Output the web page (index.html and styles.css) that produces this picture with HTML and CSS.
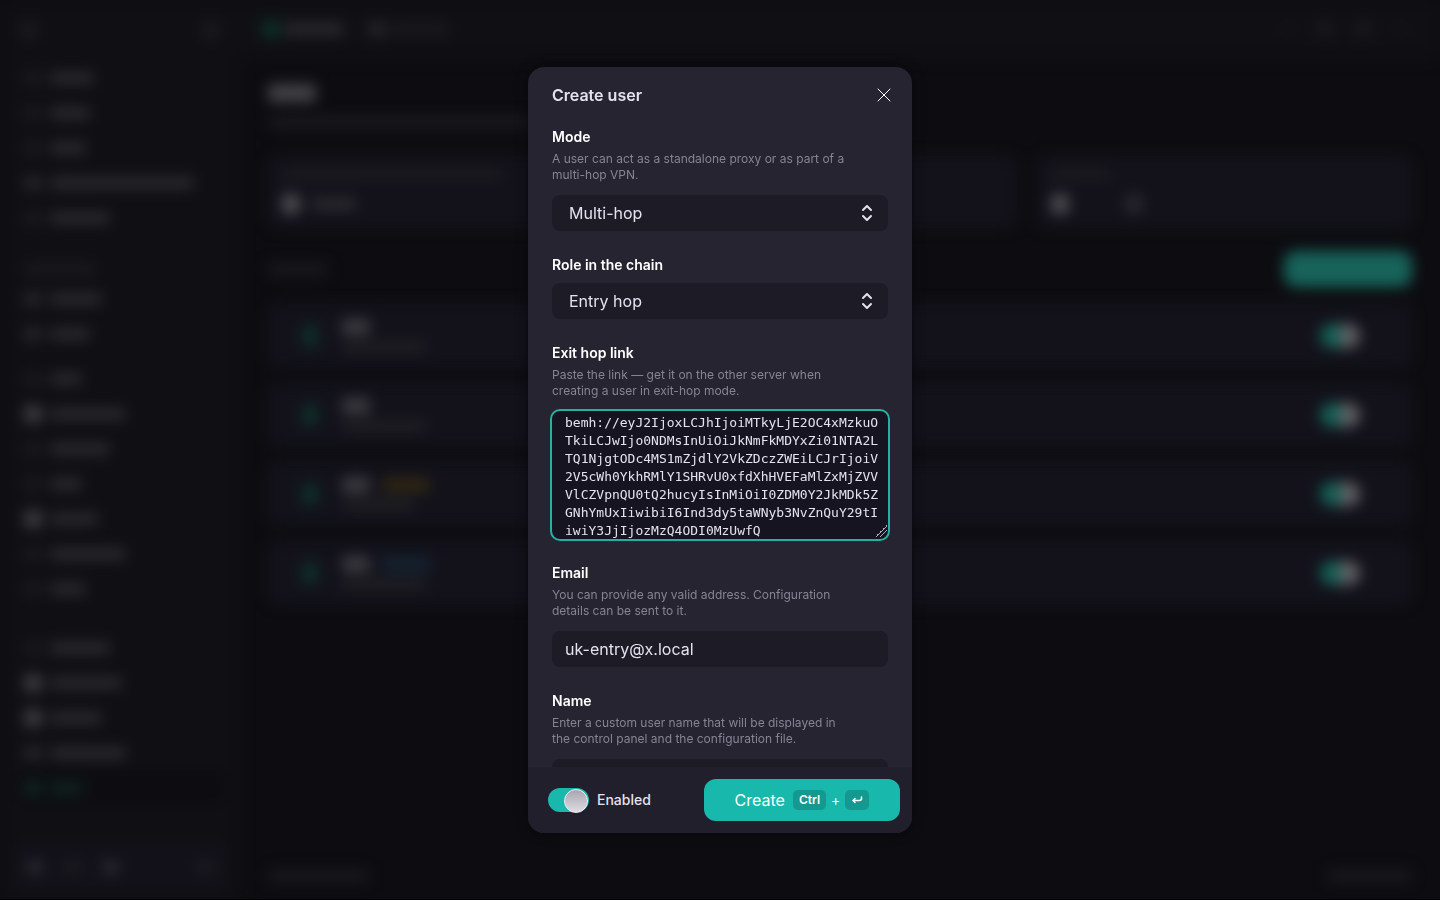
FILE: index.html
```html
<!DOCTYPE html>
<html lang="en">
<head>
<meta charset="utf-8">
<meta name="viewport" content="width=device-width, initial-scale=1">
<title>Create user</title>
<link rel="stylesheet" href="styles.css">
</head>
<body>
<div class="app" aria-hidden="true">
  <aside class="side">
    <div class="side-top"><i class="dot faint"></i><i class="dot faint"></i></div>
    <div class="group">
      <div class="item"><i class="ico"></i><i class="bar w44"></i></div>
      <div class="item"><i class="ico"></i><i class="bar w40"></i></div>
      <div class="item"><i class="ico"></i><i class="bar w36"></i></div>
      <div class="item"><i class="ico mid"></i><i class="bar w144"></i></div>
      <div class="item"><i class="ico"></i><i class="bar w60"></i></div>
    </div>
    <div class="group">
      <div class="caption"><i class="bar faint w72"></i></div>
      <div class="item"><i class="ico mid"></i><i class="bar w52"></i></div>
      <div class="item"><i class="ico mid"></i><i class="bar w40"></i></div>
    </div>
    <div class="group tight">
      <div class="item"><i class="ico"></i><i class="bar w32"></i></div>
      <div class="item"><i class="ico hi"></i><i class="bar w76"></i></div>
      <div class="item"><i class="ico"></i><i class="bar w60"></i></div>
      <div class="item"><i class="ico"></i><i class="bar w32"></i></div>
      <div class="item"><i class="ico hi"></i><i class="bar w48"></i></div>
      <div class="item"><i class="ico"></i><i class="bar w76"></i></div>
      <div class="item"><i class="ico"></i><i class="bar w36"></i></div>
    </div>
    <div class="group last">
      <div class="item"><i class="ico"></i><i class="bar w60"></i></div>
      <div class="item"><i class="ico hi"></i><i class="bar w72"></i></div>
      <div class="item"><i class="ico hi"></i><i class="bar w52"></i></div>
      <div class="item"><i class="ico mid"></i><i class="bar w76"></i></div>
      <div class="item active"><i class="ico"></i><i class="bar w32"></i></div>
    </div>
    <div class="side-foot"><i class="ico mid"></i><i class="ico"></i><i class="ico mid"></i><i class="ico end"></i></div>
  </aside>
  <div class="main">
    <div class="topbar"><i class="logo"></i><i class="bar w60"></i><i class="ico mid"></i><i class="bar faint w60"></i><span class="tools"><i class="ico dim"></i><i class="ico"></i><i class="ico"></i><i class="ico dim"></i></span></div>
    <div class="heading"><i class="bar title w48"></i><i class="bar faint w300"></i></div>
    <div class="stats">
      <div class="card stat"><i class="bar faint w220"></i><span class="line"><i class="dot hi"></i><i class="bar w44"></i></span></div>
      <div class="card stat"><i class="bar faint w60"></i><span class="line"><i class="dot hi"></i><i class="gap"></i><i class="dot"></i></span></div>
    </div>
    <div class="listhead"><i class="bar faint w60"></i><i class="primary"></i></div>
    <div class="rows">
      <div class="card row"><i class="state"></i><span class="who"><span class="line"><i class="bar hi w28"></i></span><i class="bar w84"></i></span><i class="tog"></i></div>
      <div class="card row"><i class="state"></i><span class="who"><span class="line"><i class="bar hi w28"></i></span><i class="bar w84"></i></span><i class="tog"></i></div>
      <div class="card row"><i class="state"></i><span class="who"><span class="line"><i class="bar hi w28"></i><i class="tag amber"></i></span><i class="bar w72"></i></span><i class="tog"></i></div>
      <div class="card row"><i class="state"></i><span class="who"><span class="line"><i class="bar hi w28"></i><i class="tag blue"></i></span><i class="bar w84"></i></span><i class="tog"></i></div>
    </div>
    <div class="foot"><i class="bar faint w100"></i><i class="bar faint w84"></i></div>
  </div>
</div>

<div class="overlay">
  <form class="modal" role="dialog" aria-modal="true" aria-labelledby="title">
    <header class="modal-head">
      <h2 id="title">Create user</h2>
      <button class="close" type="button" aria-label="Close">
        <svg width="14" height="14" viewBox="0 0 14 14" fill="none" stroke="currentColor" stroke-linecap="round"><path d="M1 1l12 12M13 1L1 13"/></svg>
      </button>
    </header>
    <div class="modal-body">
      <div class="field">
        <label for="mode">Mode</label>
        <p class="hint">A user can act as a standalone proxy or as part of a multi-hop VPN.</p>
        <div class="select">
          <select id="mode"><option>Multi-hop</option></select>
          <svg width="12" height="18" viewBox="0 0 12 18" fill="none" stroke="currentColor" stroke-width="2" stroke-linecap="round" stroke-linejoin="round"><path d="M2 6l4-4 4 4M2 12l4 4 4-4"/></svg>
        </div>
      </div>
      <div class="field">
        <label for="role">Role in the chain</label>
        <div class="select">
          <select id="role"><option>Entry hop</option></select>
          <svg width="12" height="18" viewBox="0 0 12 18" fill="none" stroke="currentColor" stroke-width="2" stroke-linecap="round" stroke-linejoin="round"><path d="M2 6l4-4 4 4M2 12l4 4 4-4"/></svg>
        </div>
      </div>
      <div class="field">
        <label for="link">Exit hop link</label>
        <p class="hint">Paste the link — get it on the other server when creating a user in exit-hop mode.</p>
        <textarea id="link" rows="7" spellcheck="false">bemh://eyJ2IjoxLCJhIjoiMTkyLjE2OC4xMzkuOTkiLCJwIjo0NDMsInUiOiJkNmFkMDYxZi01NTA2LTQ1NjgtODc4MS1mZjdlY2VkZDczZWEiLCJrIjoiV2V5cWh0YkhRMlY1SHRvU0xfdXhHVEFaMlZxMjZVVVlCZVpnQU0tQ2hucyIsInMiOiI0ZDM0Y2JkMDk5ZGNhYmUxIiwibiI6Ind3dy5taWNyb3NvZnQuY29tIiwiY3JjIjozMzQ4ODI0MzUwfQ</textarea>
      </div>
      <div class="field">
        <label for="email">Email</label>
        <p class="hint">You can provide any valid address. Configuration details can be sent to it.</p>
        <input id="email" class="text" type="email" value="uk-entry@x.local">
      </div>
      <div class="field">
        <label for="name">Name</label>
        <p class="hint">Enter a custom user name that will be displayed in the control panel and the configuration file.</p>
        <input id="name" class="text" type="text">
      </div>
    </div>
    <footer class="modal-foot">
      <label class="enabled"><input type="checkbox" role="switch" checked>Enabled</label>
      <button class="create" type="submit">Create
        <span class="keys"><kbd>Ctrl</kbd>+<kbd><svg width="12" height="10" viewBox="0 0 12 10" fill="none" stroke="currentColor" stroke-width="1.6" stroke-linecap="round" stroke-linejoin="round"><path d="M10.500 2v1.500a2 2 0 0 1-2 2H2M4 3.500L2 5.500l2 2"/></svg></kbd></span>
      </button>
    </footer>
  </form>
</div>
</body>
</html>
```
FILE: styles.css
```css
* { box-sizing: border-box; }
body {
  margin: 0;
  overflow: hidden;
  background: #0d0d11;
  color: #e4e2ee;
  font-family: Inter, "Liberation Sans", sans-serif;
  color-scheme: dark;
}

/* Page behind the dialog */
.app { display: flex; height: 100vh; filter: blur(7px); }
.app i { display: block; flex: none; }
.bar { height: 12px; border-radius: 4px; background: #2a2a2e; }
.ico { width: 18px; height: 14px; border-radius: 4px; background: #1a1a1e; }
.dot { width: 18px; height: 20px; border-radius: 6px; background: #26262c; }
.ico.mid { background: #26262a; }
.ico.hi { height: 18px; background: #3a3a3f; }
.bar.hi { height: 16px; background: #38383e; }
.dot.hi { background: #4c4c50; }
.bar.faint, .dot.faint { background: #1a1a1e; }
.ico.dim { background: #121216; }
.w28 { width: 28px; } .w32 { width: 32px; } .w36 { width: 36px; }
.w40 { width: 40px; } .w44 { width: 44px; } .w48 { width: 48px; }
.w52 { width: 52px; } .w60 { width: 60px; } .w72 { width: 72px; }
.w76 { width: 76px; } .w84 { width: 84px; } .w100 { width: 100px; }
.w144 { width: 144px; } .w220 { width: 220px; } .w300 { width: 300px; }

.side { display: flex; flex-direction: column; width: 240px; padding: 0 16px 10px; background: #101014; }
.side-top { display: flex; justify-content: space-between; align-items: center; height: 60px; padding: 0 4px; }
.group { margin-bottom: 24px; }
.group.tight { margin-top: -14px; }
.item { display: flex; align-items: center; gap: 8px; height: 35px; padding-left: 8px; }
.item.active { background: #0d0d11; border-radius: 8px; }
.item.active .ico, .item.active .bar { background: #0e2421; }
.caption { height: 22px; padding: 4px 8px; }
.side-foot { display: flex; align-items: center; gap: 20px; margin-top: auto; padding: 16px 10px; border-radius: 12px; background: #12111a; }
.side-foot .end { margin-left: auto; }

.main { flex: 1; display: flex; flex-direction: column; padding: 0 28px 18px; }
.topbar { display: flex; align-items: center; gap: 4px; height: 58px; margin: 0 -28px; padding: 0 22px; background: #101014; }
.topbar .ico { margin-left: 20px; }
.logo { width: 18px; height: 16px; border-radius: 6px; background: #0a3328; }
.tools { display: flex; margin-left: auto; padding-right: 8px; }
.heading { padding: 26px 0 0; }
.bar.title { height: 18px; margin-bottom: 14px; background: #434347; }
.stats { display: grid; grid-template-columns: 2fr 1fr; gap: 20px; padding-top: 28px; }
.card { border-radius: 12px; background: #13121b; }
.stat { padding: 12px 14px; height: 72px; }
.line { display: flex; align-items: center; gap: 12px; }
.stat .line { padding-top: 14px; }
.gap { width: 32px; }
.listhead { display: flex; align-items: center; justify-content: space-between; height: 76px; padding-top: 6px; }
.primary { width: 128px; height: 36px; border-radius: 12px; background: #17635a; }
.rows { display: grid; gap: 16px; }
.row { display: flex; align-items: center; gap: 24px; height: 63px; padding: 0 52px 0 34px; }
.state { width: 16px; height: 22px; border-radius: 6px; background: #0e3029; }
.who { display: grid; gap: 6px; }
.who .bar { background: #1e1e22; }
.who .bar.hi { background: #3a3a40; }
.tag { width: 48px; height: 16px; border-radius: 4px; }
.amber { background: #2c2413; }
.blue { background: #14222f; }
.tog { width: 40px; height: 24px; margin-left: auto; border-radius: 12px; background: linear-gradient(90deg, #146056 50%, #606064 50%); }
.foot { display: flex; justify-content: space-between; margin-top: auto; }

/* Dialog */
.overlay { position: fixed; inset: 0; display: flex; align-items: center; justify-content: center; border-bottom: 1px solid #000; }
.modal {
  display: flex;
  flex-direction: column;
  width: 384px;
  max-width: 100%;
  max-height: calc(85vh + 1px);
  overflow: hidden;
  border-radius: 16px;
  background: #252430;
  box-shadow: 0 0 12px #08080c;
}
.modal-head { display: flex; align-items: center; justify-content: space-between; flex: none; padding: 16px 20px 20px 24px; }
h2 { margin: 0; font-size: 16px; line-height: 24px; font-weight: 600; }
button { border: 0; font: inherit; cursor: pointer; }
.close { display: flex; padding: 1px; background: none; color: #fff; }
.modal-body { display: flex; flex-direction: column; gap: 24px; flex: 1; min-height: 0; overflow: auto; padding: 0 24px 24px; scrollbar-width: none; }
.field { flex: none; display: flex; flex-direction: column; }
.field label { margin-bottom: 8px; color: #fff; font-size: 14px; line-height: 20px; font-weight: 600; }
.field label:has(+ .hint) { margin-bottom: 4px; }
.hint { margin: 0 0 12px; padding-right: 36px; color: #868492; font-size: 12px; line-height: 16px; }
.select { position: relative; }
.select svg { position: absolute; right: 15px; top: 9px; pointer-events: none; }
select, .text {
  width: 100%;
  height: 36px;
  border: 0;
  border-radius: 8px;
  background: #1c1b26;
  color: #e4e2ee;
  font: 16px/24px Inter, "Liberation Sans", sans-serif;
}
select { appearance: none; padding: 0 36px 0 17px; }
.text { padding: 0 13px; }
textarea {
  width: 100%;
  height: 128px;
  padding: 3px 5px 0 13px;
  border: 0;
  border-radius: 8px;
  outline: 2px solid #25b0a3;
  background: #151420 linear-gradient(135deg, transparent 50%, #b0aeb8 50% 56%, transparent 56% 68%, #b0aeb8 68% 74%, transparent 74%) no-repeat right 1px bottom 2px / 12px 12px;
  color: #e4e2ee;
  font: 13px/18px "DejaVu Sans Mono", "Liberation Mono", monospace;
  word-break: break-all;
  scrollbar-width: none;
  resize: none;
}
.modal-foot { display: flex; align-items: center; justify-content: space-between; flex: none; padding: 12px 12px 12px 20px; background: #211f2b; }
.enabled { display: flex; align-items: center; gap: 8px; font-size: 14px; line-height: 20px; font-weight: 500; }
.enabled input {
  appearance: none;
  width: 41px;
  height: 24px;
  margin: 0;
  padding: 1px;
  border-radius: 12px;
  background: #18b8ac;
}
.enabled input::before {
  content: "";
  display: block;
  width: 22px;
  height: 22px;
  border: 1px solid #f2f0f4;
  border-radius: 50%;
  background: linear-gradient(#a9a5b0, #dedce2);
}
.enabled input:checked::before { margin-left: auto; }
.create {
  display: flex;
  align-items: center;
  justify-content: center;
  gap: 8px;
  min-width: 196px;
  padding: 9px 28px;
  border-radius: 12px;
  background: #18b8ac;
  color: #fff;
  font-size: 16px;
  line-height: 24px;
}
.keys { display: flex; align-items: center; gap: 5px; font-size: 14px; line-height: 20px; }
kbd {
  display: flex;
  align-items: center;
  justify-content: center;
  min-width: 24px;
  height: 20px;
  padding: 0 6px;
  border-radius: 5px;
  background: #15988f;
  font: 600 12px/20px Inter, "Liberation Sans", sans-serif;
}
```
